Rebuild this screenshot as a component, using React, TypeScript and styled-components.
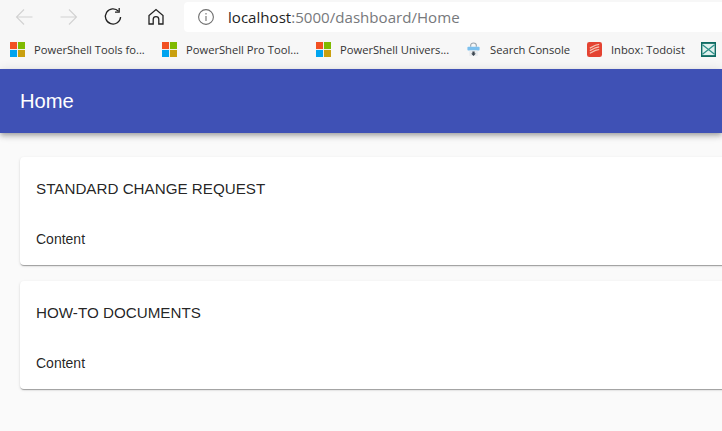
import type { ReactElement } from 'react';
import styled, { createGlobalStyle } from 'styled-components';

const GlobalStyle = createGlobalStyle`
	html, body {
		margin: 0;
		padding: 0;
		height: 100%;
		overflow: hidden;
		background: #fafafa;
	}
	* {
		box-sizing: border-box;
	}
`;

const Page = styled.div`
	width: 722px;
	height: 431px;
	overflow: hidden;
	background: #fafafa;
	display: flex;
	flex-direction: column;
`;

const Toolbar = styled.div`
	height: 35px;
	background: #f7f7f7;
	display: flex;
	align-items: flex-start;
	padding-top: 2px;
	flex-shrink: 0;
`;

const NavGroup = styled.div`
	width: 184px;
	height: 30px;
	flex-shrink: 0;
	display: flex;
	align-items: center;
	padding-left: 15px;
`;

const NavIcon = styled.svg<{ $gap: number }>`
	width: 20px;
	height: 20px;
	margin-right: ${(p) => p.$gap}px;
	flex-shrink: 0;
	fill: none;
`;

const AddressBar = styled.div`
	flex: 1;
	height: 30px;
	background: #ffffff;
	border-radius: 4px 0 0 4px;
	display: flex;
	align-items: center;
	padding-left: 13px;
	gap: 13px;
	font-family: 'Open Sans', sans-serif;
	font-size: 15.1px;
	color: #77797c;
`;

const InfoIcon = styled.svg`
	width: 18px;
	height: 18px;
	flex-shrink: 0;
`;

const Host = styled.span`
	color: #1f1f1f;
`;

const Bookmarks = styled.div`
	height: 34px;
	background: #f7f7f7;
	display: flex;
	align-items: center;
	padding: 0 0 5px 10px;
	flex-shrink: 0;
	overflow: hidden;
`;

const Bookmark = styled.div<{ $width: number }>`
	width: ${(p) => p.$width}px;
	flex-shrink: 0;
	display: flex;
	align-items: center;
	gap: 9px;
	font-family: 'Open Sans', sans-serif;
	font-size: 11.2px;
	color: #333333;
	white-space: nowrap;
`;

const Favicon = styled.svg`
	width: 15px;
	height: 15px;
	flex-shrink: 0;
`;

const AppBar = styled.header`
	height: 64px;
	flex-shrink: 0;
	background: #3f51b5;
	color: #ffffff;
	display: flex;
	align-items: center;
	padding-left: 20px;
	font-family: 'Liberation Sans', sans-serif;
	font-size: 20.2px;
	box-shadow: 0 2px 4px -1px rgba(0, 0, 0, 0.2), 0 4px 5px 0 rgba(0, 0, 0, 0.14),
		0 1px 10px 0 rgba(0, 0, 0, 0.12);
	z-index: 1;
`;

const Main = styled.main`
	padding: 24px 0 0 20px;
	display: flex;
	flex-direction: column;
	gap: 16px;
`;

const Card = styled.section`
	width: 900px;
	height: 108px;
	background: #ffffff;
	border-radius: 4px;
	padding: 24px 16px 0;
	font-family: 'Liberation Sans', sans-serif;
	color: rgba(0, 0, 0, 0.87);
	box-shadow: 0 2px 1px -1px rgba(0, 0, 0, 0.2), 0 1px 1px 0 rgba(0, 0, 0, 0.14),
		0 1px 3px 0 rgba(0, 0, 0, 0.12);
`;

const CardTitle = styled.div`
	font-size: 15.2px;
	line-height: 16px;
`;

const CardBody = styled.div`
	margin-top: 34px;
	font-size: 14px;
	line-height: 16px;
`;

function WindowsLogo(): ReactElement {
	return (
		<Favicon viewBox="0 0 16 16">
			<rect x="0" y="0" width="7.5" height="7.5" fill="#f25022" />
			<rect x="8.5" y="0" width="7.5" height="7.5" fill="#7fba00" />
			<rect x="0" y="8.5" width="7.5" height="7.5" fill="#00a4ef" />
			<rect x="8.5" y="8.5" width="7.5" height="7.5" fill="#c9a010" />
		</Favicon>
	);
}

function SearchConsoleLogo(): ReactElement {
	return (
		<Favicon viewBox="0 0 16 16">
			<path d="M5 5V3.5a3 2.5 0 0 1 6 0V5" fill="none" stroke="#9aa4ad" strokeWidth="1.2" />
			<rect x="1.5" y="5" width="13" height="4" rx="1" fill="#7cc0ee" />
			<rect x="3.5" y="9" width="9" height="6" rx="1" fill="#e8ebee" />
			<path d="M6.8 10h2.4v2.2h1.3L8 15l-2.5-2.8h1.3z" fill="#3c4650" />
		</Favicon>
	);
}

function TodoistLogo(): ReactElement {
	return (
		<Favicon viewBox="0 0 16 16">
			<rect width="16" height="16" rx="2.5" fill="#e44332" />
			<path
				d="M3 6.5l6-3 4-1M3 9.2l6-3 4-1M3 12l6-3 4-1"
				fill="none"
				stroke="#f6c5b4"
				strokeWidth="1.3"
			/>
		</Favicon>
	);
}

function MailLogo(): ReactElement {
	return (
		<Favicon viewBox="0 0 16 16">
			<rect width="16" height="16" fill="#0f6b63" />
			<rect x="1.5" y="2" width="13" height="12" fill="#dff1ee" />
			<path d="M1.5 3L8 8l6.5-5M1.5 13L8 8l6.5 5" fill="none" stroke="#2c8f88" strokeWidth="1.4" />
		</Favicon>
	);
}

export default function App(): ReactElement {
	return (
		<Page>
			<GlobalStyle />
			<Toolbar>
				<NavGroup>
					<NavIcon $gap={23} viewBox="0 0 20 20" stroke="#d2d2d2" strokeWidth="1.1">
						<path d="M1.5 10h16M9 2.5L1.5 10 9 17.5" />
					</NavIcon>
					<NavIcon $gap={25} viewBox="0 0 20 20" stroke="#d2d2d2" strokeWidth="1.1">
						<path d="M2.5 10h16M11 2.5l7.5 7.5-7.5 7.5" />
					</NavIcon>
					<NavIcon $gap={23} viewBox="0 0 20 20" stroke="#222222" strokeWidth="1.3">
						<path d="M15.5 4.2A7.6 7.6 0 1 0 17.6 10" />
						<path d="M16.2 1v4.2H12" />
					</NavIcon>
					<NavIcon $gap={0} viewBox="0 0 20 20" stroke="#222222" strokeWidth="1.3">
						<path d="M3 17V8.5L10 2.5l7 6V17h-4.2v-4.5a2.8 2.8 0 0 0-5.6 0V17z" />
					</NavIcon>
				</NavGroup>
				<AddressBar>
					<InfoIcon viewBox="0 0 18 18" fill="none" stroke="#6f6f6f" strokeWidth="1.1">
						<circle cx="9" cy="9" r="7.4" />
						<path d="M9 8v5M9 5v1.4" />
					</InfoIcon>
					<span>
						<Host>localhost</Host>:5000/dashboard/Home
					</span>
				</AddressBar>
			</Toolbar>
			<Bookmarks>
				<Bookmark $width={152}>
					<WindowsLogo />
					PowerShell Tools fo...
				</Bookmark>
				<Bookmark $width={154}>
					<WindowsLogo />
					PowerShell Pro Tool...
				</Bookmark>
				<Bookmark $width={150}>
					<WindowsLogo />
					PowerShell Univers...
				</Bookmark>
				<Bookmark $width={121}>
					<SearchConsoleLogo />
					Search Console
				</Bookmark>
				<Bookmark $width={114}>
					<TodoistLogo />
					Inbox: Todoist
				</Bookmark>
				<Bookmark $width={20}>
					<MailLogo />
				</Bookmark>
			</Bookmarks>
			<AppBar>Home</AppBar>
			<Main>
				<Card>
					<CardTitle>STANDARD CHANGE REQUEST</CardTitle>
					<CardBody>Content</CardBody>
				</Card>
				<Card>
					<CardTitle>HOW-TO DOCUMENTS</CardTitle>
					<CardBody>Content</CardBody>
				</Card>
			</Main>
		</Page>
	);
}
